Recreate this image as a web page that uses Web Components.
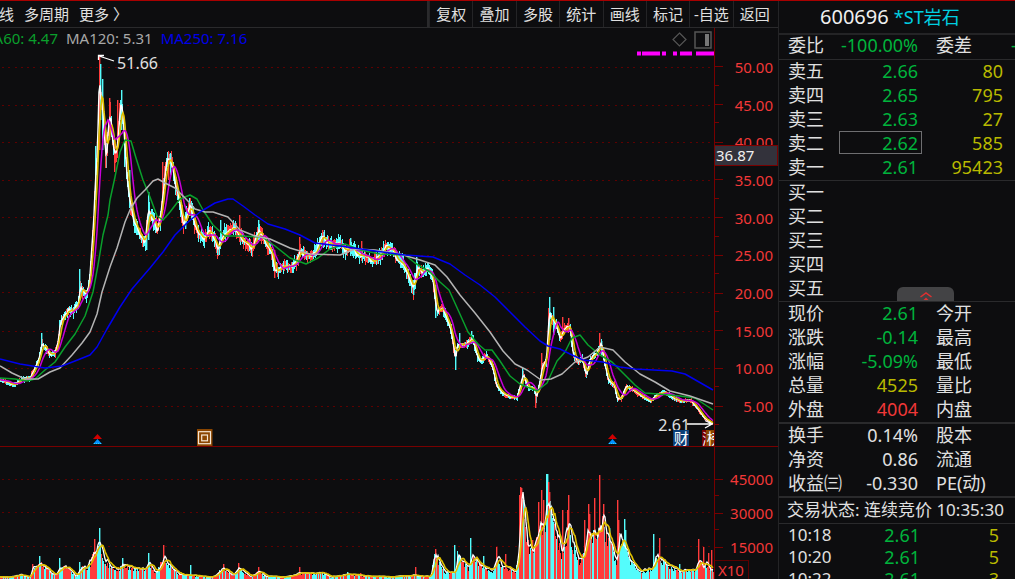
<!DOCTYPE html>
<html lang="zh-CN">
<head>
<meta charset="utf-8">
<title>600696 *ST岩石</title>
<style>
html,body{margin:0;height:100%;background:#0d0d0f}
body{font-family:"Noto Sans","Noto Sans CJK SC",sans-serif;color:#e0e0e0;overflow:hidden}
</style>
</head>
<body>
<stock-app></stock-app>
<script>
const make = (name, html, setup) => {
  const tpl = document.createElement('template');
  tpl.innerHTML = html;
  customElements.define(name, class extends HTMLElement {
    constructor() {
      super();
      this.attachShadow({mode: 'open'}).append(tpl.content.cloneNode(true));
    }
    connectedCallback() {
      if (setup && !this.ready) { this.ready = true; setup(this.shadowRoot); }
    }
  });
};

/* deterministic noise for the bars */
const noise = seed => () => {
  seed = (seed * 1664525 + 1013904223) >>> 0;
  return seed / 4294967296;
};
const parse = s => s.trim().split(/\s+/).map(p => p.split(',').map(Number));
const sample = (pts, n) => {
  const out = []; let k = 0;
  for (let x = 0; x < n; x++) {
    while (k < pts.length - 2 && pts[k + 1][0] <= x) k++;
    const [a, b] = pts[k], [c, d] = pts[k + 1];
    out.push(b + (d - b) * Math.min(1, Math.max(0, (x - a) / (c - a))));
  }
  return out;
};
const average = (v, n) => v.map((_, i) => {
  let s = 0, c = 0;
  for (let j = Math.max(0, i - n + 1); j <= i; j++) { s += v[j]; c++; }
  return s / c;
});
const line = (v, color, w = 1) => `<polyline fill="none" stroke="${color}" stroke-width="${w}" points="${v.map((y, x) => x + ',' + y.toFixed(1)).join(' ')}"/>`;
const curve = (s, color) => `<polyline fill="none" stroke="${color}" stroke-width="1.5" stroke-linejoin="round" points="${s}"/>`;
const grid = ys => ys.map(y => `<path d="M2 ${y}.5H714" stroke="#5e0000" stroke-dasharray="2 4.25" shape-rendering="crispEdges"/>`).join('');
const RED = '#ff3b3b', CYAN = '#54fcfc';

make('tool-bar', `
<style>
:host{display:flex;justify-content:space-between;height:26px;border-bottom:1px solid #2a2a2c;overflow:hidden}
nav{display:flex}
button{all:unset;box-sizing:border-box;font-size:15px;line-height:26px;white-space:nowrap;text-align:center;cursor:pointer}
.left{gap:10px;margin-left:-1px}
.right{width:351px;border-left:2px solid #2a2a2c;box-sizing:border-box;padding-right:2px}
.right button{flex:1 1 0;border-left:1px solid #242426}
</style>
<nav class="left"><button>线</button><button>多周期</button><button>更多 〉</button></nav>
<nav class="right"><button>复权</button><button>叠加</button><button>多股</button><button>统计</button><button>画线</button><button>标记</button><button>-自选</button><button>返回</button></nav>
`);

const PRICE = parse(`0,380 6,382 14,385 18,382 22,379 30,378 34,369 38,361 42,343 45,348 50,354 55,353 58,340 60,322 64,316 68,310 73,311 78,303 80,287 83,292 86,296 89,282 91,255 93,225 95,180 97,150 99,75 100,95 102,105 104,138 106,160 108,128 110,112 112,140 115,155 117,148 119,118 121,102 123,125 125,150 127,182 130,203 134,223 140,236 145,243 148,212 152,218 157,230 160,218 162,200 165,172 168,156 172,165 175,185 178,196 180,208 183,225 187,215 190,206 194,222 198,234 204,240 208,231 213,235 218,251 222,235 228,231 233,228 240,236 246,244 252,249 258,230 263,238 268,247 271,252 274,268 278,271 284,264 290,268 296,262 300,251 306,256 312,256 317,248 322,237 328,243 334,245 340,243 345,252 350,247 356,253 362,256 372,260 380,256 385,247 392,249 396,257 402,263 408,275 413,290 417,268 422,272 427,268 432,275 435,300 437,312 442,308 447,320 451,330 455,360 457,345 461,345 466,344 472,338 477,356 480,361 486,355 492,366 496,385 502,393 510,397 517,397 523,374 528,388 534,388 536,398 540,380 542,366 546,360 549,312 552,320 556,325 560,338 565,327 570,328 573,355 578,362 582,358 586,375 590,359 596,353 601,344 604,362 608,380 614,385 617,399 621,398 626,386 632,389 640,395 650,401 656,395 664,392 672,397 680,401 690,400 697,408 704,418 713,424`);
const WICKS = [[41,333,348,1],[79,269,300,1],[99,57,150,0],[100,64,120,1],[102,79,150,1],[95,146,200,1],[109,98,140,0],[117,100,140,0],[121,90,130,1],[105,130,168,0],[114,140,172,0],[124,135,167,1],[129,170,208,1],[146,236,250,1],[148,192,240,1],[162,162,210,0],[168,152,180,0],[170,154,175,1],[185,212,229,1],[217,245,255,1],[239,215,242,0],[220,220,240,1],[258,220,240,1],[274,250,278,0],[299,237,255,0],[322,230,245,0],[350,238,256,1],[361,241,256,0],[413,280,295,1],[416,257,275,1],[435,285,318,1],[455,350,370,1],[459,333,345,1],[471,331,344,1],[522,368,385,1],[535,392,408,0],[541,353,380,0],[548,308,350,0],[549,297,340,1],[553,307,335,1],[562,317,330,0],[568,318,332,0],[585,365,377,0],[599,333,350,0],[601,341,356,1]];

make('price-chart', `
<style>
:host{display:block;position:relative;overflow:hidden;min-height:0}
svg.plot{position:absolute;inset:0;width:100%;height:100%}
.ma{position:relative;display:flex;gap:8px;font-size:15px;line-height:20px;white-space:nowrap}
.ma span:first-child{width:58px;display:flex;justify-content:flex-end;overflow:hidden;color:#0a9f2c}
.ma span:nth-child(2){color:#a8a8a8}
.ma span:nth-child(3){color:#0000e8}
.mark{position:absolute;left:var(--x);top:var(--y);line-height:16px;font-size:16px;white-space:nowrap}
.badge{width:16px;height:16px;font-size:15px;text-align:center;color:#fff}
</style>
<svg class="plot" viewBox="0 28 714 418" preserveAspectRatio="none"></svg>
<div class="ma"><span>MA60: 4.47</span><span>MA120: 5.31</span><span>MA250: 7.16</span></div>
<span class="mark" style="--x:16.4%;--y:6.5%">51.66</span>
<span class="mark" style="--x:92.2%;--y:93%">2.61</span>
<span class="mark badge" style="--x:94.3%;--y:96.1%;background:#0b3f78">财</span>
<span class="mark badge" style="--x:98.3%;--y:96.1%;background:#780000">涨</span>
<span class="mark badge" style="--x:98.9%;--y:96.1%;background:#8a4500">榜</span>
`, root => {
  const r = noise(9), p = sample(PRICE, 714);
  let s = grid([67,105,142,180,217,255,292,331,368,406]);
  const v = p.map((y, x) => y + (r() - .5) * Math.min(6, (430 - y) / 30));
  let up = false;
  for (let x = 0; x < 713; x++) {
    if (r() < (up ? .5 : .35)) up = !up;
    const a = 1 + Math.min(10, (432 - p[x]) / 22);
    const slope = Math.min(10, Math.abs(p[Math.min(713, x + 1)] - p[x]));
    const h = a * (.5 + r()) + slope * .8, t = p[x] - h * (.35 + r() * .4);
    s += `<rect x="${x}" y="${t.toFixed(1)}" width="1" height="${(h + 1).toFixed(1)}" fill="${up ? RED : CYAN}" shape-rendering="crispEdges"/>`;
  }
  for (const [x, a, b, c] of WICKS) s += `<rect x="${x}" y="${a}" width="1.4" height="${b - a}" fill="${c ? CYAN : RED}"/>`;
  s += line(average(v, 2), '#fff', 1.5) + line(average(v, 5), '#e0c000', 1.6) + line(average(v, 11), '#c800d8', 1.5);
  s += curve('0,378 15,379 27,381 35,379 45,370 55,362 65,347 75,334 85,316 93,292 98,265 103,235 108,215 110,200 115,177 120,152 125,140 131,141 136,158 143,180 150,197 157,216 163,220 170,212 180,199 190,195 197,199 203,210 213,225 225,236 240,236 262,237 275,246 290,258 306,264 318,258 330,249 345,244 360,250 380,254 405,255 415,263 430,272 440,282 449,290 459,312 468,332 478,344 485,350 492,350 500,361 510,376 520,384 537,391 547,383 557,361 565,352 572,338 580,335 588,345 600,355 612,362 625,375 635,385 645,393 658,394 680,396 695,398 713,410', '#0a9f2c');
  s += curve('0,366 12,373 25,379 38,379 50,372 60,368 72,355 82,343 90,332 97,314 102,292 110,267 117,248 125,222 130,210 137,198 145,190 153,181 158,179 165,183 175,188 187,200 195,209 205,212 213,212 228,217 240,230 255,236 270,239 290,248 310,254 340,255 355,249 375,250 400,254 420,260 435,265 447,277 460,295 475,313 490,332 503,351 515,364 527,370 541,380 551,379 562,374 575,362 588,357 600,347 613,350 625,362 640,374 655,382 670,391 690,396 713,404', '#b4b4b4');
  s += curve('0,359 20,364 45,368 62,366 75,361 90,355 97,347 107,329 120,307 132,289 150,268 163,252 175,235 187,223 200,212 215,203 228,199 233,199 243,206 255,215 268,224 285,229 300,235 315,243 340,246 375,251 405,255 433,257 450,264 465,275 480,285 495,297 510,312 525,327 540,341 548,346 560,349 570,354 583,360 603,362 620,367 635,369 672,371 685,374 713,390', '#0000f0');
  /* callout arrows */
  s += '<path d="M114 61L99 56M98.500 60V55.500H104M687 424H711M705 420.500L712 424L705 428" fill="none" stroke="#fff" stroke-width="1.300"/>';
  /* signal strip */
  for (const [x, w] of [[637,4],[642,18],[662,4],[673,4],[680,12],[696,18]]) s += `<rect x="${x}" y="51.500" width="${w}" height="4" fill="#f0f"/>`;
  /* diamond and side-pane glyphs */
  s += '<path d="M679.500 33L686 39.500L679.500 46L673 39.500Z" fill="none" stroke="#555" stroke-width="1.200"/><rect x="695" y="32" width="16" height="16" fill="none" stroke="#555" stroke-width="1.500"/><rect x="705" y="34" width="4" height="12" fill="#777"/>';
  /* paired arrowheads under the price */
  for (const x of [97, 612]) s += `<path d="M${x + .5} 434L${x + 5} 439H${x - 4}Z" fill="#d00000"/><path d="M${x + .5} 439L${x + 5} 444H${x - 4}Z" fill="#0090ff"/><path d="M${x - 3} 443.500H${x + 4}" stroke="#30d0ff" stroke-dasharray="1 1"/>`;
  s += '<rect x="197" y="429" width="15.500" height="17" fill="#8a4500"/><rect x="198.500" y="431.700" width="12" height="12" fill="none" stroke="#f4e6d4" stroke-width="1.200"/><rect x="201.700" y="435" width="5.800" height="5.800" fill="none" stroke="#f4e6d4" stroke-width="1.200"/>';
  root.querySelector('svg').innerHTML = s;
});

const VOLUME = parse(`0,577 10,577 20,575 30,577 32,566 36,568 40,562 46,568 52,574 56,573 60,566 66,567 70,570 76,577 80,567 86,567 90,562 94,550 96,555 99,540 101,548 104,558 110,566 118,568 124,564 130,567 145,570 149,563 155,573 160,563 165,556 170,565 178,574 190,575 205,577 215,576 220,570 225,569 232,576 238,568 244,572 250,577 258,571 265,576 285,577 298,573 310,573 322,573 330,577 350,574 365,576 390,577 415,575 430,577 434,555 438,560 445,572 455,572 457,553 462,560 468,568 473,555 480,564 485,566 492,572 497,558 503,566 515,572 519,550 521,500 524,503 527,540 533,550 537,535 540,518 543,530 547,510 551,505 556,530 561,552 565,542 569,524 573,545 580,562 584,550 588,530 592,533 597,536 602,512 605,530 612,548 616,566 619,532 624,545 630,560 640,571 652,568 656,555 660,557 668,566 680,571 695,569 700,558 703,568 705,562 712,570`);
const SPIKES = [[32,564,0],[39,556,1],[59,558,1],[79,562,1],[94,539,0],[99,528,1],[122,558,1],[148,553,1],[163,545,0],[190,565,1],[223,564,0],[238,563,0],[258,567,0],[299,567,0],[347,572,1],[360,573,0],[415,567,0],[435,549,0],[454,545,1],[470,538,1],[483,556,1],[496,547,0],[505,554,0],[519,495,0],[520,487,0],[521,488,0],[523,500,1],[532,540,0],[538,502,0],[541,490,0],[543,500,0],[546,474,1],[547,474,1],[548,482,0],[549,492,0],[562,510,0],[567,510,0],[568,495,0],[584,520,0],[588,504,0],[589,514,0],[594,498,0],[599,475,0],[603,504,0],[609,528,1],[617,500,0],[618,520,0],[624,519,1],[625,530,1],[653,534,1],[659,538,0],[679,564,1],[698,539,0],[703,547,0],[708,553,0],[711,550,0]];

make('volume-chart', `
<style>
:host{display:block;position:relative;overflow:hidden}
svg{position:absolute;inset:0;width:100%;height:100%}
</style>
<svg viewBox="0 447 714 132" preserveAspectRatio="none"></svg>
`, root => {
  const r = noise(23), p = sample(VOLUME, 714);
  let s = grid([479,512,546]), up = false;
  for (let x = 0; x < 714; x++) {
    if (r() < .4) up = !up;
    const h = (579 - p[x]) * (.7 + r() * .4);
    const red = x > 515 && x < 612 ? up || r() < .2 : x > 620 && x < 700 ? up && r() < .3 : up;
    s += `<rect x="${x}" y="${(579 - h).toFixed(1)}" width="1" height="${h.toFixed(1)}" fill="${red ? RED : CYAN}" shape-rendering="crispEdges"/>`;
  }
  for (const [x, y, c] of SPIKES) s += `<rect x="${x}" y="${y}" width="1.4" height="${579 - y}" fill="${c ? CYAN : RED}"/>`;
  const v = p.map(y => Math.min(577.5, y + (r() - .5) * (579 - y) * .5));
  s += line(average(v, 3), '#fff', 1.3) + line(average(v, 7), '#e0c000', 1.6);
  root.querySelector('svg').innerHTML = s;
});

make('price-axis', `
<style>
:host{display:flex;flex-direction:column;position:relative;min-height:0;border-left:1px solid #780000;padding:20px 0 21px;box-sizing:border-box;font-size:15px;line-height:20px;color:#f23838}
.step{flex:1;display:flex;align-items:center;justify-content:space-between;padding-right:5px;
 background:linear-gradient(#780000,#780000) 0 50%/8px 1px no-repeat,linear-gradient(#780000,#780000) 0 100%/4px 1px no-repeat}
.step::before{content:""}
.cursor{position:absolute;left:0;right:0;top:28%;box-sizing:border-box;height:21px;line-height:18px;padding-left:1px;background:#33323b;border:1px solid #780000;border-left:0;color:#f0f0f0}
</style>
<slot></slot><div class="cursor">36.87</div>
`, root => {
  for (let p = 50; p > 0; p -= 5) {
    const d = document.createElement('div');
    d.className = 'step'; d.textContent = p.toFixed(2);
    root.querySelector('slot').before(d);
  }
});

make('volume-axis', `
<style>
:host{display:block;position:relative;border-left:1px solid #780000;padding-top:15px;box-sizing:border-box;font-size:15px;color:#f23838;overflow:hidden}
.step{height:34px;line-height:34px;text-align:right;padding-right:5px;
 background:linear-gradient(#780000,#780000) 0 50%/8px 1px no-repeat,linear-gradient(#780000,#780000) 0 100%/4px 1px no-repeat}
.unit{position:absolute;left:0;bottom:0;width:34px;height:19px;line-height:18px;padding-left:3px;border:1px solid #5a0000;border-width:1px 1px 0 0;box-sizing:border-box;background:#0d0d0f}
</style>
<div class="step">45000</div><div class="step">30000</div><div class="step">15000</div><div class="unit">X10</div>
`);

make('quote-panel', `
<style>
:host{display:block;position:relative;border-left:1px solid #242426;box-sizing:border-box;overflow:hidden;font-size:18px}
h1{margin:0;height:32px;line-height:32px;font-size:20px;font-weight:400;padding-left:41px;color:#f0f0f0;border-bottom:2px solid #242426;white-space:nowrap}
h1 b{font-weight:400;font-size:18px;color:#00cfe0}
table{width:100%;border-collapse:collapse;table-layout:fixed}
td,th{padding:0 0 2px;height:22px;line-height:22px;font-weight:400;text-align:left;white-space:nowrap;overflow:visible}
th:first-child{width:62px;padding-left:9px;box-sizing:border-box}
td:nth-child(2){width:77px;text-align:right}
.book td:nth-child(3){text-align:right;padding-right:12px;color:#b9b900}
.info th:nth-child(3){width:93px;padding-left:18px;box-sizing:border-box}
section{border-bottom:1px solid #2a2a2c;position:relative}
.gap{border-bottom-width:2px}
.g{color:#00b43c}.y{color:#b9b900}.r{color:#f03838}
.ratio td,.ratio th{height:20px;line-height:20px;padding-bottom:4px}
.status{padding-left:8px;font-size:17px;line-height:24px;height:25px;white-space:nowrap}
.ticks td,.ticks th{height:22px;padding:0}
.ticks th:first-child{padding-left:9px;font-size:17px}
.ticks td:nth-child(2){width:79px}
.ticks td:nth-child(3){padding-right:16px}
.frame{position:absolute;left:60px;top:71px;width:81px;height:21px;border:1px solid #6e6e70;pointer-events:none}
.fold{all:unset;position:absolute;right:61px;bottom:0;width:57px;height:14px;background:#434345;border-radius:6px 6px 0 0;cursor:pointer}
.fold svg{display:block;margin:3px auto 0}
</style>
<h1>600696 <b>*ST岩石</b></h1>
<section class="ratio"><table class="info"><tr><th>委比</th><td class="g">-100.00%</td><th>委差</th><td class="g">-</td></tr></table></section>
<section><table class="book">
<tr><th>卖五</th><td class="g">2.66</td><td>80</td></tr>
<tr><th>卖四</th><td class="g">2.65</td><td>795</td></tr>
<tr><th>卖三</th><td class="g">2.63</td><td>27</td></tr>
<tr><th>卖二</th><td class="g">2.62</td><td>585</td></tr>
<tr><th>卖一</th><td class="g">2.61</td><td>95423</td></tr></table><i class="frame"></i></section>
<section><table class="book">
<tr><th>买一</th><td></td><td></td></tr><tr><th>买二</th><td></td><td></td></tr><tr><th>买三</th><td></td><td></td></tr><tr><th>买四</th><td></td><td></td></tr><tr><th>买五</th><td></td><td></td></tr></table>
<button class="fold" aria-label="收起"><svg width="14" height="10" viewBox="0 0 14 10"><path d="M1.500 6L7 2L12.500 6" fill="none" stroke="#e03030" stroke-width="1.500"/><path d="M4.500 9L7 6.500L9.500 9Z" fill="#e03030"/></svg></button></section>
<section class="gap"><table class="info">
<tr><th>现价</th><td class="g">2.61</td><th>今开</th><td></td></tr>
<tr><th>涨跌</th><td class="g">-0.14</td><th>最高</th><td></td></tr>
<tr><th>涨幅</th><td class="g">-5.09%</td><th>最低</th><td></td></tr>
<tr><th>总量</th><td class="y">4525</td><th>量比</th><td></td></tr>
<tr><th>外盘</th><td class="r">4004</td><th>内盘</th><td></td></tr></table></section>
<section class="gap"><table class="info">
<tr><th>换手</th><td>0.14%</td><th>股本</th><td></td></tr>
<tr><th>净资</th><td>0.86</td><th>流通</th><td></td></tr>
<tr><th>收益㈢</th><td>-0.330</td><th>PE(动)</th><td></td></tr></table></section>
<section class="status">交易状态: 连续竞价 10:35:30</section>
<table class="book ticks">
<tr><th>10:18</th><td class="g">2.61</td><td>5</td></tr>
<tr><th>10:20</th><td class="g">2.61</td><td>5</td></tr>
<tr><th>10:22</th><td class="g">2.61</td><td>3</td></tr></table>
`);

make('stock-app', `
<style>
:host{display:grid;grid-template-columns:minmax(0,1fr) 237px;height:100vh;min-height:480px;border-top:1px solid #a80000;box-sizing:border-box}
main{display:grid;grid-template-columns:minmax(0,1fr) 64px;grid-template-rows:auto minmax(0,1fr) 132px;min-height:0}
tool-bar{grid-column:1/-1}
price-chart,price-axis{border-bottom:1px solid #780000}
quote-panel{min-height:0}
</style>
<main><tool-bar></tool-bar><price-chart></price-chart><price-axis></price-axis><volume-chart></volume-chart><volume-axis></volume-axis></main>
<quote-panel></quote-panel>
`);
</script>
</body>
</html>
